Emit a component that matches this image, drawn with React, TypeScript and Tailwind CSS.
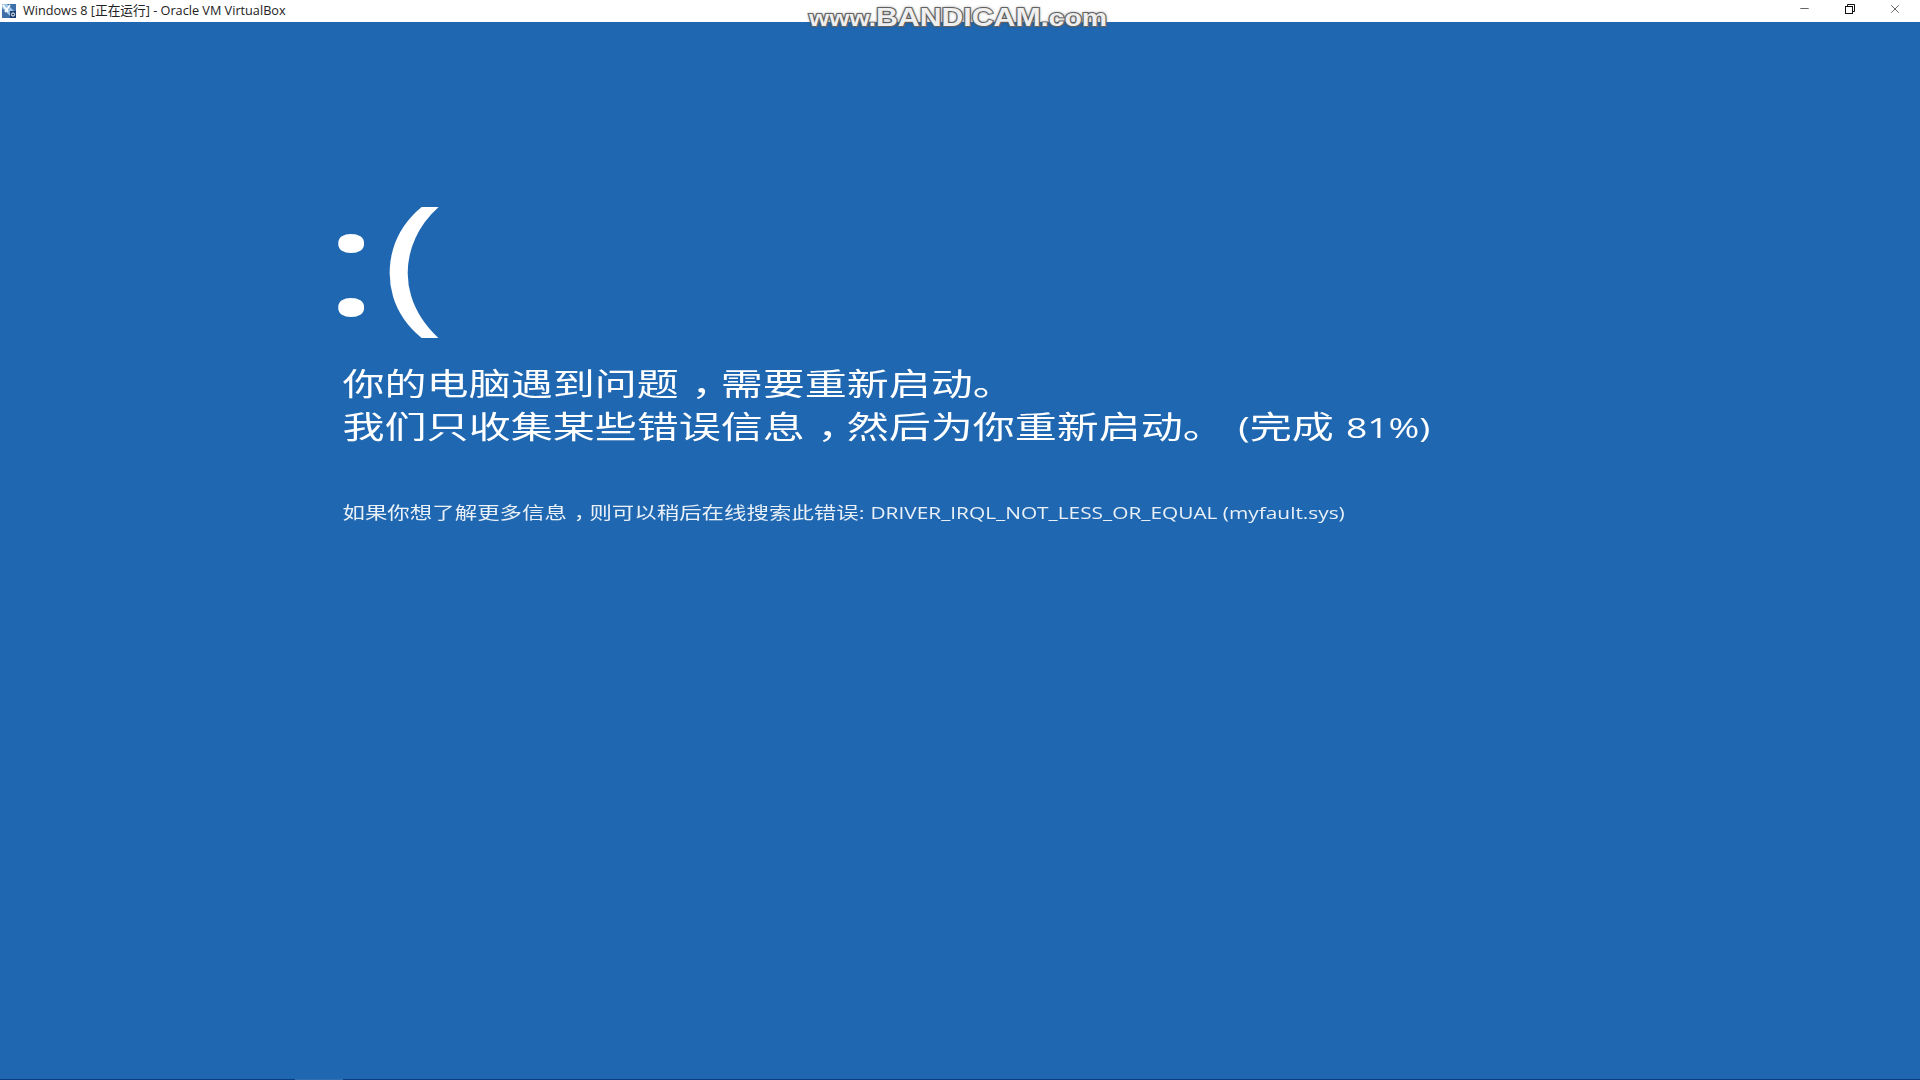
import { Minus, X } from "lucide-react";

const cjk = "font-['Open_Sans','Noto_Sans_CJK_SC',sans-serif]";

function VBoxIcon() {
  return (
    <svg width="16" height="16" viewBox="0 0 16 16">
      <rect x="1" y="1" width="14" height="14" fill="#3f6fa8" />
      <path d="M1 1h5l9 9v5h-4L1 5z" fill="#9cc4e8" />
      <path d="M2 2l5 7M9 2L4 9" stroke="#fff" strokeWidth="1.6" />
      <rect x="9" y="8" width="6" height="7" fill="#1c3f73" />
      <circle cx="12" cy="11.5" r="1.6" fill="none" stroke="#fff" strokeWidth="1" />
    </svg>
  );
}

function RestoreIcon() {
  return (
    <svg width="10" height="10" viewBox="0 0 10 10" fill="none" stroke="#111" strokeWidth="1">
      <rect x="0.5" y="2.5" width="7" height="7" />
      <path d="M2.5 2.5v-2h7v7h-2" />
    </svg>
  );
}

// full-width comma sits in the middle of its cell on this screen
function Comma() {
  return <span className="ml-[0.3em] tracking-[-0.3em]">，</span>;
}

export default function App() {
  return (
    <div className="relative flex h-screen w-full flex-col overflow-hidden bg-[#1f67b1]">
      <div className="flex h-[22px] shrink-0 items-center bg-white pb-[1px] pl-[1px]">
        <VBoxIcon />
        <span className="ml-[6px] font-['Open_Sans','Noto_Sans_CJK_SC',sans-serif] text-[12.7px] text-[#222] whitespace-nowrap">
          Windows 8 [正在运行] - Oracle VM VirtualBox
        </span>
        <div className="ml-auto flex items-center pb-[4px] pr-[3px]">
          <div className="flex w-[45px] justify-center"><Minus size={13} strokeWidth={1.2} color="#111" /></div>
          <div className="flex w-[45px] justify-center"><RestoreIcon /></div>
          <div className="flex w-[45px] justify-center"><X size={14} strokeWidth={1.1} color="#111" /></div>
        </div>
      </div>

      <div className="absolute left-[809px] top-[0px] origin-left scale-x-[1.21] whitespace-nowrap font-['Liberation_Sans',sans-serif] font-bold leading-[34px] text-white/90 [-webkit-text-stroke:2px_#6f6f6f] [paint-order:stroke_fill] [text-shadow:0_0_3px_#444]">
        <span className="text-[21.5px]">www.</span>
        <span className="text-[25px]">BANDICAM</span>
        <span className="text-[23.5px]">.com</span>
      </div>

      <div className="flex-1 pl-[325px] pt-[159px] text-white blur-[0.4px]">
        <div className="ml-[-3px] flex h-[150px] items-center font-['Open_Sans',sans-serif] leading-none">
          <span className="mt-[4px] origin-left scale-x-[1.5] text-[148px]">:</span>
          <span className="ml-[20px] origin-left scale-x-[1.45] text-[150px] font-normal">(</span>
        </div>
        <div className={`mt-[31px] origin-left scale-x-[1.355] whitespace-nowrap pl-[13px] text-[31px] leading-[43px] ${cjk}`}>
          <p>你的电脑遇到问题<Comma />需要重新启动。</p>
          <p>
            我们只收集某些错误信息<Comma />然后为你重新启动。
            <span className="ml-[10px] text-[28.5px]">(</span>完成 <span className="ml-[1px] text-[27.5px]">81%)</span>
          </p>
        </div>
        <p className={`mt-[52px] origin-left scale-x-[1.345] whitespace-nowrap pl-[13px] text-[16.7px] leading-[24px] text-white/90 ${cjk}`}>
          如果你想了解更多信息<Comma />则可以稍后在线搜索此错误: <span className="text-[15.5px]">DRIVER_IRQL_NOT_LESS_OR_EQUAL (myfault.sys)</span>
        </p>
      </div>

      <div className="flex h-px shrink-0 bg-[#0a3d82]">
        <div className="ml-[295px] w-[48px] bg-[#2f6fae]" />
      </div>
    </div>
  );
}
